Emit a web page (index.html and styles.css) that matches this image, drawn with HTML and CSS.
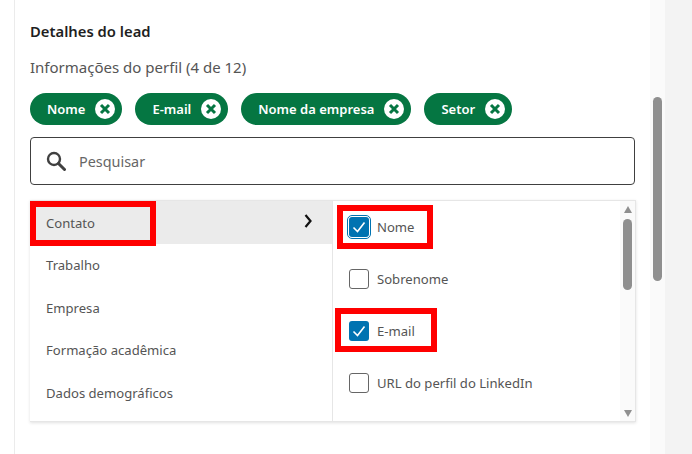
FILE: index.html
```html
<!DOCTYPE html>
<html lang="pt-BR">
<head>
    <meta charset="UTF-8">
    <title>Detalhes do lead</title>
    <link rel="stylesheet" href="styles.css">
</head>
<body>
    <div class="page">
        <main class="panel">
            <h2 class="title">Detalhes do lead</h2>
            <p class="subtitle">Informações do perfil (4 de 12)</p>

            <div class="chips">
                <span class="chip">Nome <svg class="chip-x" viewBox="0 0 20 20"><circle cx="10" cy="10" r="10" fill="#fff"/><path d="M6 6l8 8M14 6l-8 8" stroke="#057642" stroke-width="3"/></svg></span>
                <span class="chip">E-mail <svg class="chip-x" viewBox="0 0 20 20"><circle cx="10" cy="10" r="10" fill="#fff"/><path d="M6 6l8 8M14 6l-8 8" stroke="#057642" stroke-width="3"/></svg></span>
                <span class="chip">Nome da empresa <svg class="chip-x" viewBox="0 0 20 20"><circle cx="10" cy="10" r="10" fill="#fff"/><path d="M6 6l8 8M14 6l-8 8" stroke="#057642" stroke-width="3"/></svg></span>
                <span class="chip">Setor <svg class="chip-x" viewBox="0 0 20 20"><circle cx="10" cy="10" r="10" fill="#fff"/><path d="M6 6l8 8M14 6l-8 8" stroke="#057642" stroke-width="3"/></svg></span>
            </div>

            <div class="search">
                <svg class="search-icon" viewBox="0 0 20 20"><circle cx="8" cy="8" r="6" fill="none" stroke="#404040" stroke-width="2.400"/><path d="M12.500 12.500l6 6" stroke="#404040" stroke-width="3" stroke-linecap="round"/></svg>
                <span class="search-text">Pesquisar</span>
            </div>

            <div class="picker">
                <ul class="cats">
                    <li class="cat cat-active">Contato
                        <svg class="cat-arrow" viewBox="0 0 8 14"><path d="M1.500 1l5 6-5 6" fill="none" stroke="#111" stroke-width="2.200"/></svg>
                    </li>
                    <li class="cat">Trabalho</li>
                    <li class="cat">Empresa</li>
                    <li class="cat">Formação acadêmica</li>
                    <li class="cat">Dados demográficos</li>
                </ul>
                <ul class="opts">
                    <li class="opt"><span class="box box-on box-focus"><svg viewBox="0 0 20 20"><path d="M4.500 10.500l4 4 7-9" fill="none" stroke="#fff" stroke-width="1.600"/></svg></span>Nome</li>
                    <li class="opt"><span class="box"></span>Sobrenome</li>
                    <li class="opt"><span class="box box-on"><svg viewBox="0 0 20 20"><path d="M4.500 10.500l4 4 7-9" fill="none" stroke="#fff" stroke-width="1.600"/></svg></span>E-mail</li>
                    <li class="opt"><span class="box"></span>URL do perfil do LinkedIn</li>
                </ul>
                <div class="mini-scroll">
                    <span class="arrow-up"></span>
                    <span class="mini-thumb"></span>
                    <span class="arrow-down"></span>
                </div>
            </div>

            <div class="mark mark-contato"></div>
            <div class="mark mark-nome"></div>
            <div class="mark mark-email"></div>
        </main>

        <div class="track"><div class="thumb"></div></div>
        <div class="side"></div>
    </div>
</body>
</html>
```

FILE: styles.css
```css
* {
    box-sizing: border-box;
}
html, body {
    margin: 0;
    padding: 0;
    height: 100%;
    overflow: hidden;
}
body {
    font-family: "Noto Sans", "Open Sans", sans-serif;
    background-color: #ffffff;
}
.page {
    display: flex;
    height: 454px;
}
.panel {
    position: relative;
    width: 636px;
    margin-left: 14px;
    padding: 21px 0 0 15px;
    border-left: 1px solid #ebebeb;
}
.title {
    margin: 0;
    font-size: 14.800px;
    line-height: 20px;
    font-weight: 600;
    color: #1f1f1f;
}
.subtitle {
    margin: 16px 0 0 0;
    font-size: 15px;
    line-height: 20px;
    color: #555;
}
.chips {
    display: flex;
    gap: 13px;
    margin-top: 16px;
}
.chip {
    display: flex;
    align-items: center;
    justify-content: space-between;
    height: 32px;
    padding: 0 7px 0 17px;
    border-radius: 16px;
    background-color: #057642;
    color: #ffffff;
    font-size: 13px;
    font-weight: 600;
    gap: 10px;
}
.chip-x {
    width: 20px;
    height: 20px;
}
.search {
    display: flex;
    align-items: center;
    width: 605px;
    height: 48px;
    margin-top: 12px;
    padding-left: 15px;
    border: 1px solid #404040;
    border-radius: 4px;
}
.search-icon {
    width: 20px;
    height: 20px;
}
.search-text {
    margin-left: 13px;
    font-size: 14.400px;
    color: #666;
}
.picker {
    display: flex;
    width: 606px;
    height: 222px;
    margin-top: 15px;
    border: 1px solid #e6e6e6;
    border-left: none;
    box-shadow: 0 1px 3px rgba(0, 0, 0, 0.12);
}
.cats, .opts {
    list-style: none;
    margin: 0;
    padding: 0;
}
.cats {
    width: 303px;
    border-right: 1px solid #e6e6e6;
}
.cat {
    display: flex;
    align-items: center;
    justify-content: space-between;
    height: 42.500px;
    padding: 1px 20px 0 16px;
    font-size: 13.100px;
    color: #555;
}
.cat-active {
    background-color: #ebebeb;
}
.cat-arrow {
    width: 8px;
    height: 14px;
    margin-top: -3px;
}
.opts {
    flex: 1;
}
.opt {
    display: flex;
    align-items: center;
    height: 52px;
    padding-left: 16px;
    font-size: 13.100px;
    color: #555;
}
.box {
    width: 20px;
    height: 20px;
    margin-right: 8px;
    border: 1px solid #666;
    border-radius: 3px;
}
.box svg {
    display: block;
    width: 20px;
    height: 20px;
}
.box-on {
    border: none;
    background-color: #0073b1;
}
.box-focus {
    outline: 1px solid #0073b1;
    outline-offset: 1px;
}
.mini-scroll {
    display: flex;
    flex-direction: column;
    align-items: center;
    width: 15px;
    background-color: #fafafa;
    padding-top: 5px;
}
.arrow-up {
    border-left: 4px solid transparent;
    border-right: 4px solid transparent;
    border-bottom: 7px solid #8f8f8f;
}
.arrow-down {
    margin-top: auto;
    margin-bottom: 4px;
    border-left: 4px solid transparent;
    border-right: 4px solid transparent;
    border-top: 7px solid #8f8f8f;
}
.mini-thumb {
    width: 9px;
    height: 71px;
    margin-top: 6px;
    border-radius: 5px;
    background-color: #8f8f8f;
}
.mark {
    position: absolute;
    border: 6px solid #ff0000;
}
.mark-contato {
    left: 15px;
    top: 201px;
    width: 126px;
    height: 45px;
}
.mark-nome {
    left: 322px;
    top: 205px;
    width: 96px;
    height: 44px;
}
.mark-email {
    left: 320px;
    top: 308px;
    width: 102px;
    height: 44px;
}
.track {
    width: 15px;
    background-color: #fafafa;
    padding: 97px 3px 0 3px;
}
.thumb {
    width: 9px;
    height: 184px;
    border-radius: 5px;
    background-color: #8f8f8f;
}
.side {
    flex: 1;
    background-color: #f3f3f3;
}
```
